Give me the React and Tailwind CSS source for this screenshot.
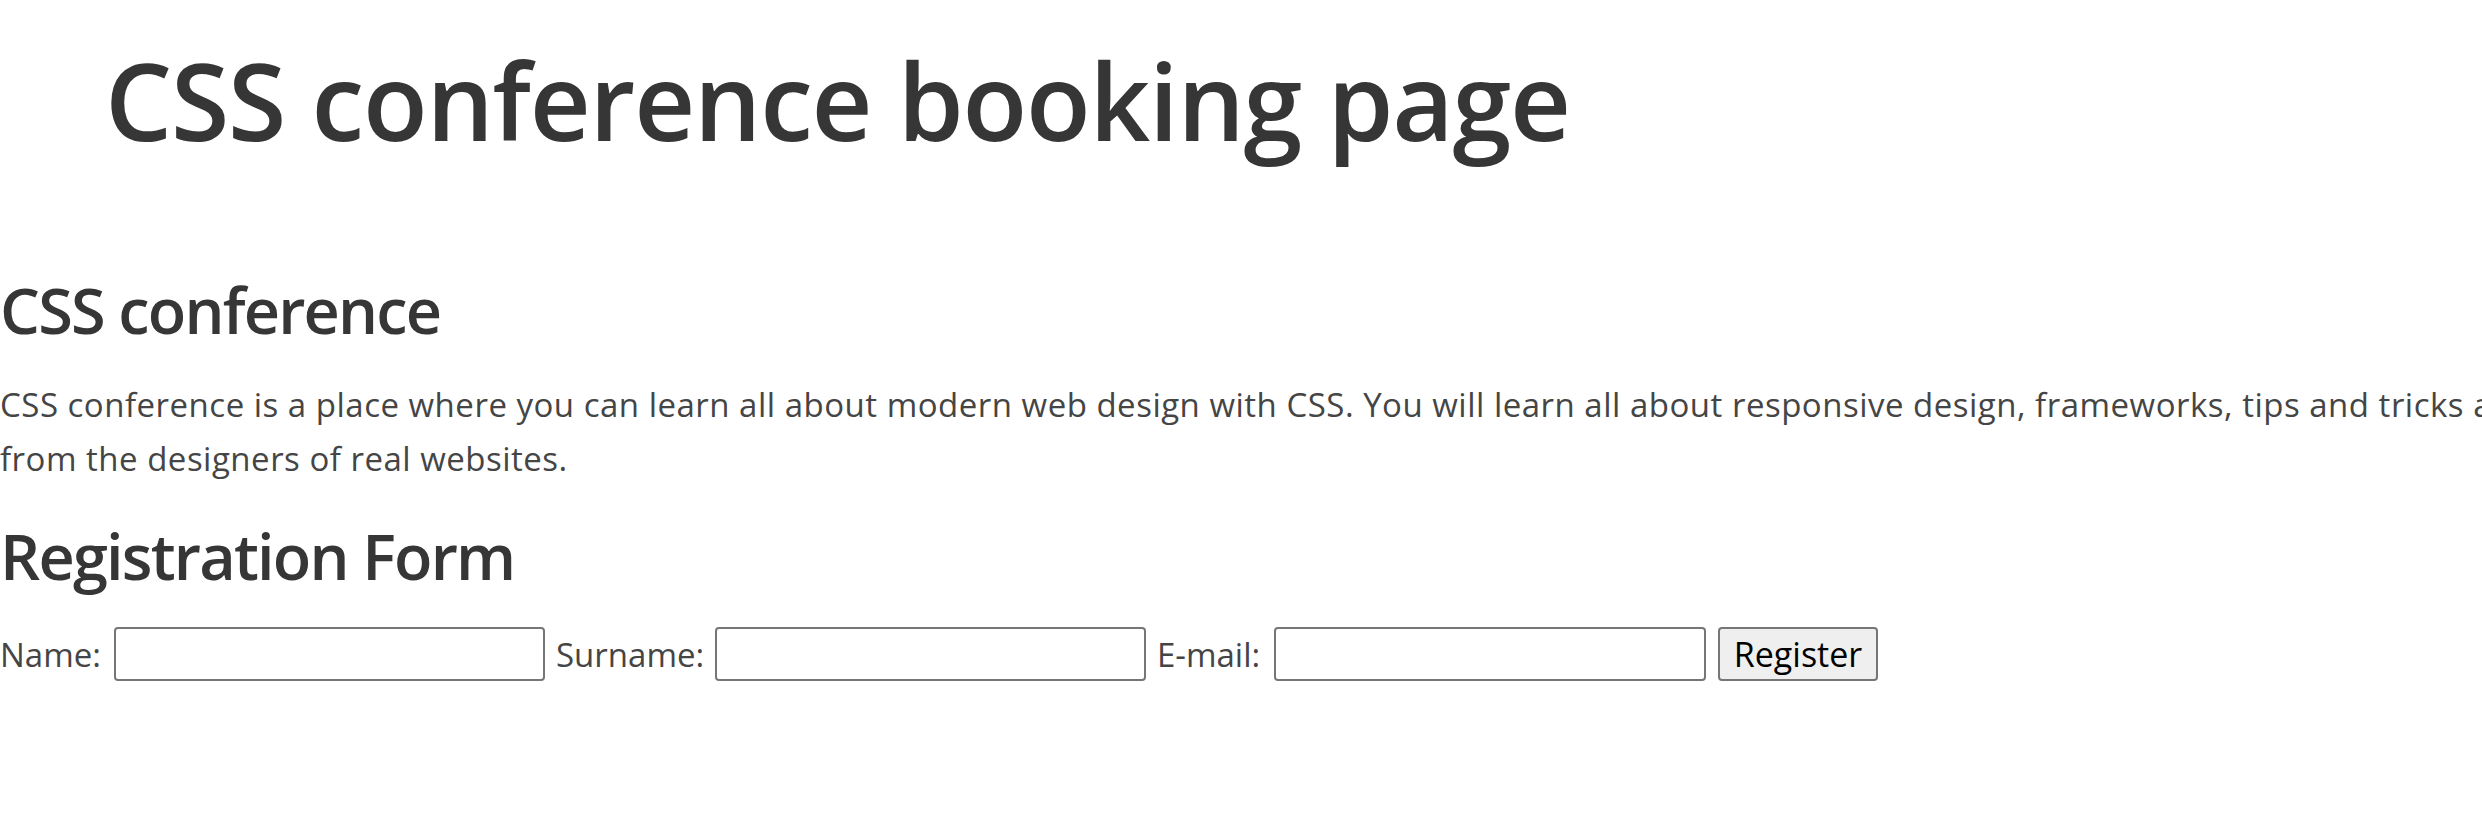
export default function App() {
  return (
    <div className="w-full h-[832px] overflow-hidden bg-white text-[#454545] font-['Open_Sans',sans-serif]">
      <h1 className="mt-[47px] pl-[105px] text-[106px] leading-none font-semibold tracking-[-1.2px] text-[#363636] whitespace-nowrap">
        CSS conference booking page
      </h1>

      <section className="mt-[125px]">
        <h2 className="text-[63px] leading-none font-semibold tracking-[-1.8px] text-[#363636] whitespace-nowrap">
          CSS conference
        </h2>
        <p className="mt-[37px] text-[33px] leading-[54px] tracking-[0.5px] whitespace-nowrap">
          CSS conference is a place where you can learn all about modern web design with CSS. You will learn all about responsive design, frameworks, tips and tricks and best practices
          <br />
          from the designers of real websites.
        </p>
      </section>

      <section className="mt-[38px]">
        <h2 className="text-[63px] leading-none font-semibold tracking-[-1.8px] text-[#363636] whitespace-nowrap">
          Registration Form
        </h2>
        <form className="mt-[40px] flex items-center text-[33px] leading-none" onSubmit={(e) => e.preventDefault()}>
          <label htmlFor="name" className="w-[103px] whitespace-nowrap">Name:</label>
          <input id="name" type="text" className="ml-[11px] w-[431px] h-[54px] border-2 border-[#767676] rounded-[4px] bg-white" />
          <label htmlFor="surname" className="ml-[11px] w-[148px] whitespace-nowrap">Surname:</label>
          <input id="surname" type="text" className="ml-[11px] w-[431px] h-[54px] border-2 border-[#767676] rounded-[4px] bg-white" />
          <label htmlFor="email" className="ml-[11px] w-[106px] whitespace-nowrap">E-mail:</label>
          <input id="email" type="email" className="ml-[11px] w-[432px] h-[54px] border-2 border-[#767676] rounded-[4px] bg-white" />
          <button type="submit" className="ml-[12px] w-[160px] h-[54px] border-2 border-[#767676] rounded-[4px] bg-[#efefef] text-black text-[34px] leading-none">
            Register
          </button>
        </form>
      </section>
    </div>
  )
}
